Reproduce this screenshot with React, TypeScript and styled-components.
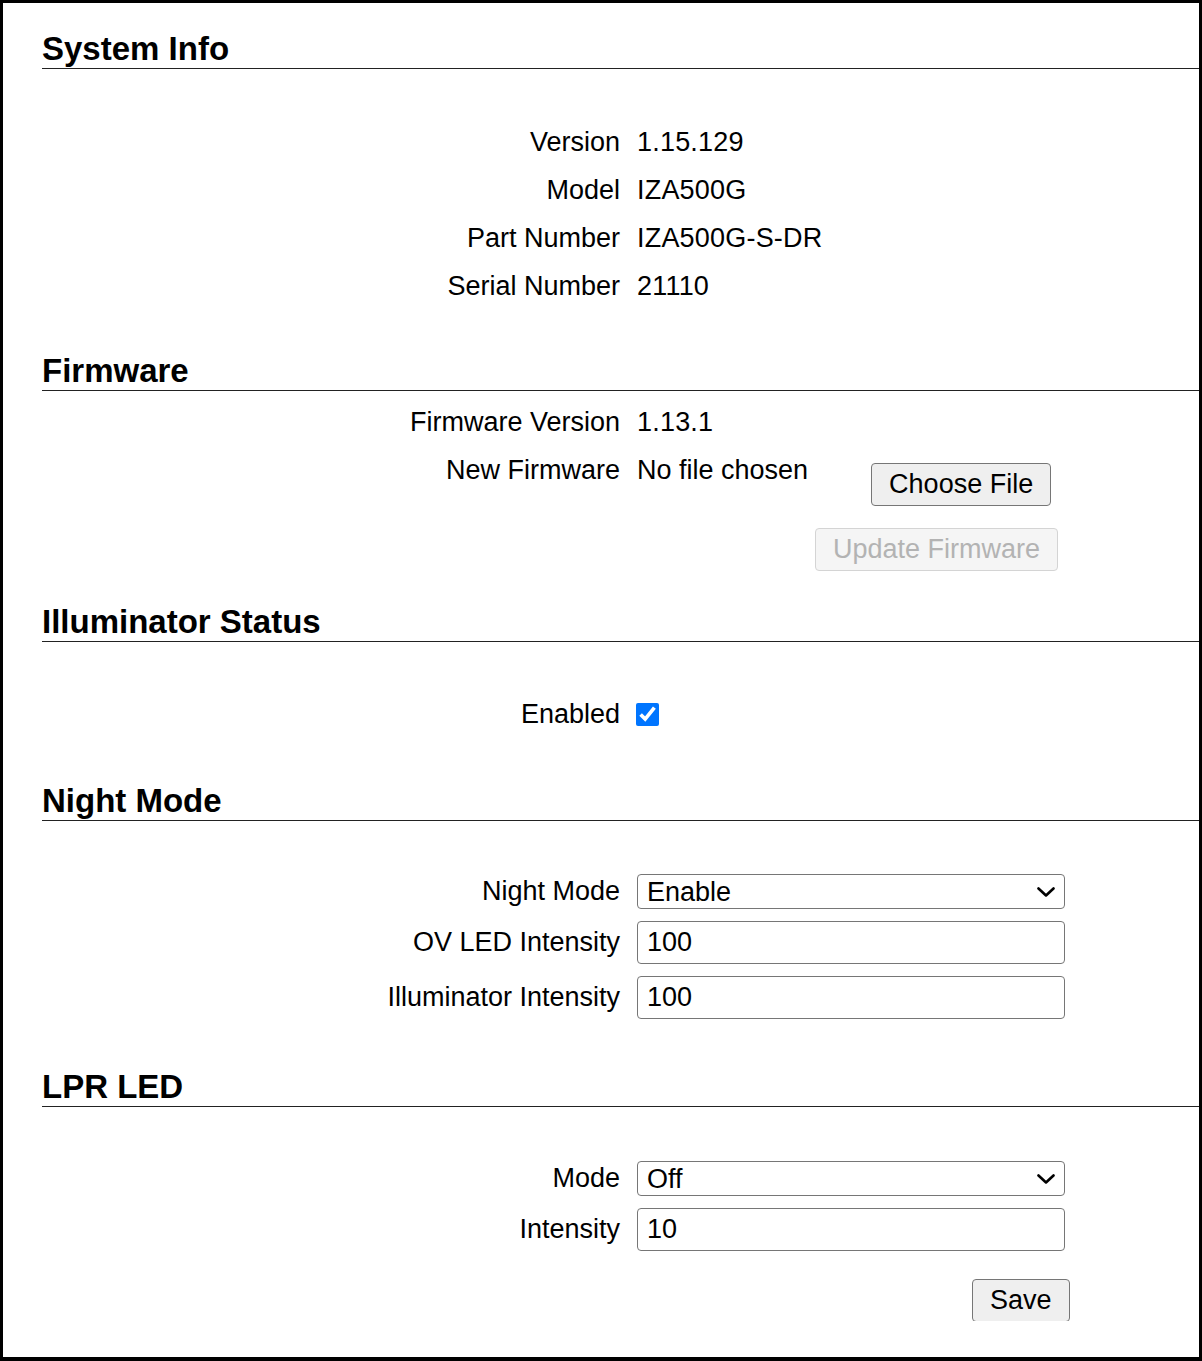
import styled, { createGlobalStyle } from "styled-components";

const GlobalStyle = createGlobalStyle`
  html, body {
    margin: 0;
    padding: 0;
    background: #fff;
  }
  body {
    font-family: "Liberation Sans", Arial, sans-serif;
    color: #000;
  }
  * {
    box-sizing: border-box;
  }
`;

const Frame = styled.div`
  width: 1202px;
  height: 1361px;
  border: 3px solid #000;
  border-bottom-width: 4px;
  background: #fff;
`;

const Viewport = styled.div`
  height: 1318px;
  overflow: hidden;
  display: flow-root;
`;

const Heading = styled.h2<{ $top: number }>`
  margin: ${(p) => p.$top}px 0 0 39px;
  font-size: 33px;
  line-height: 38px;
  font-weight: 700;
  border-bottom: 1px solid #222;
`;

const Fields = styled.div<{ $top: number; $gap?: number; $align?: string }>`
  display: grid;
  grid-template-columns: 617px 1fr;
  column-gap: 17px;
  row-gap: ${(p) => p.$gap ?? 0}px;
  margin-top: ${(p) => p.$top}px;
  align-items: ${(p) => p.$align ?? "start"};
  font-size: 27px;
`;

const Label = styled.div<{ $line?: number }>`
  text-align: right;
  line-height: ${(p) => (p.$line ? `${p.$line}px` : "normal")};
  white-space: nowrap;
`;

const Value = styled.div<{ $line?: number }>`
  line-height: ${(p) => (p.$line ? `${p.$line}px` : "normal")};
  white-space: nowrap;
  letter-spacing: 0.2px;
`;

const FileCell = styled.div`
  display: flex;
  align-items: flex-start;
`;

const FileName = styled.span`
  line-height: 48px;
`;

const Button = styled.button<{ $left?: number; $top?: number }>`
  height: 43px;
  padding: 0 17px;
  margin: ${(p) => p.$top ?? 0}px 0 0 ${(p) => p.$left ?? 0}px;
  justify-self: start;
  font-family: inherit;
  font-size: 27px;
  color: #000;
  background: #efefef;
  border: 1px solid #767676;
  border-radius: 4px;

  &:disabled {
    color: #b3b3b3;
    background: #f5f5f5;
    border-color: #d4d4d4;
  }
`;

const Check = styled.input`
  width: 23px;
  height: 23px;
  margin: 0 0 0 -1px;
  justify-self: start;
  accent-color: #0075ff;
`;

const SelectWrap = styled.div`
  position: relative;
  width: 428px;
`;

const Select = styled.select`
  appearance: none;
  display: block;
  width: 428px;
  height: 35px;
  padding: 0 9px;
  font-family: inherit;
  font-size: 27px;
  color: #000;
  background: #fff;
  border: 1px solid #767676;
  border-radius: 4px;
`;

const Chevron = styled.svg`
  position: absolute;
  right: 10px;
  top: 50%;
  margin-top: -5px;
  pointer-events: none;
`;

const TextInput = styled.input`
  display: block;
  width: 428px;
  height: 43px;
  padding: 0 9px;
  font-family: inherit;
  font-size: 27px;
  color: #000;
  background: #fff;
  border: 1px solid #767676;
  border-radius: 4px;
`;

const Dropdown = ({ value, options }: { value: string; options: string[] }) => (
  <SelectWrap>
    <Select defaultValue={value}>
      {options.map((o) => (
        <option key={o}>{o}</option>
      ))}
    </Select>
    <Chevron width="18" height="10" viewBox="0 0 18 10" fill="none">
      <polyline
        points="1.5,1.5 9,8.5 16.5,1.5"
        stroke="#000"
        strokeWidth="2.6"
        strokeLinecap="round"
        strokeLinejoin="round"
      />
    </Chevron>
  </SelectWrap>
);

const info = [
  ["Version", "1.15.129"],
  ["Model", "IZA500G"],
  ["Part Number", "IZA500G-S-DR"],
  ["Serial Number", "21110"],
];

export default function App() {
  return (
    <>
      <GlobalStyle />
      <Frame>
        <Viewport>
          <Heading $top={27}>System Info</Heading>
          <Fields $top={49}>
            {info.map(([k, v]) => [
              <Label key={k} $line={48}>
                {k}
              </Label>,
              <Value key={k + "v"} $line={48}>
                {v}
              </Value>,
            ])}
          </Fields>

          <Heading $top={42}>Firmware</Heading>
          <Fields $top={7}>
            <Label $line={48}>Firmware Version</Label>
            <Value $line={48}>1.13.1</Value>
            <Label $line={48}>New Firmware</Label>
            <FileCell>
              <FileName>No file chosen</FileName>
              <Button $left={63} $top={17}>
                Choose File
              </Button>
            </FileCell>
            <div />
            <Button $left={178} $top={22} disabled>
              Update Firmware
            </Button>
          </Fields>

          <Heading $top={32}>Illuminator Status</Heading>
          <Fields $top={48} $align="center">
            <Label $line={48}>Enabled</Label>
            <Check type="checkbox" defaultChecked />
          </Fields>

          <Heading $top={44}>Night Mode</Heading>
          <Fields $top={53} $gap={12} $align="center">
            <Label>Night Mode</Label>
            <Dropdown value="Enable" options={["Enable", "Disable"]} />
            <Label>OV LED Intensity</Label>
            <TextInput defaultValue="100" />
            <Label>Illuminator Intensity</Label>
            <TextInput defaultValue="100" />
          </Fields>

          <Heading $top={49}>LPR LED</Heading>
          <Fields $top={54} $gap={12} $align="center">
            <Label>Mode</Label>
            <Dropdown value="Off" options={["Off", "On", "Auto"]} />
            <Label>Intensity</Label>
            <TextInput defaultValue="10" />
            <div />
            <Button $left={335} $top={16}>
              Save
            </Button>
          </Fields>
        </Viewport>
      </Frame>
    </>
  );
}
